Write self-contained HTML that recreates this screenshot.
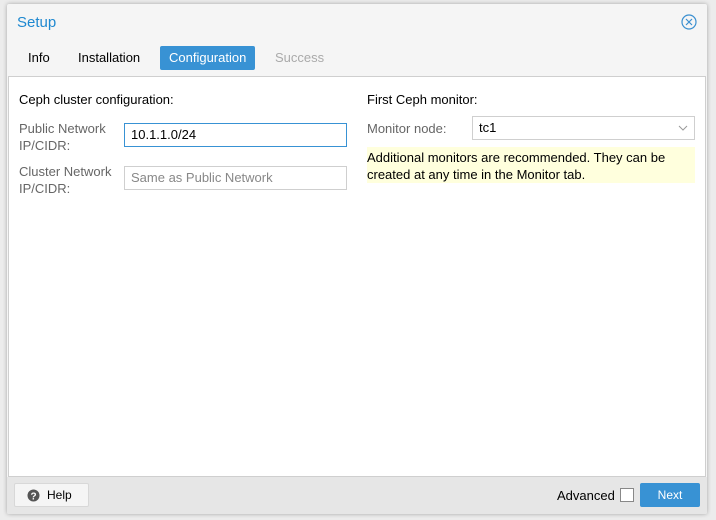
<!DOCTYPE html><html><head><style>
body{margin:0;width:716px;height:520px;background:#ececec;font-family:"Liberation Sans",sans-serif;font-size:13px;position:relative;overflow:hidden}
.win{position:absolute;left:7px;top:4px;width:700px;height:510px;background:#f5f5f5;box-shadow:0 0 4px rgba(0,0,0,.3);border-radius:2px}
.a{position:absolute}
.title{left:10px;top:10px;color:#1e88d0;font-size:15px}
.tab{top:42px;height:24px;line-height:24px;padding:0 10px}
.body{left:1px;top:72px;width:696px;height:399px;background:#fff;border:1px solid #cfcfcf}
.foot{left:0;top:473px;width:700px;height:37px;background:#e6e6e6;border-radius:0 0 2px 2px}
.lbl{color:#666;line-height:17px}
.inp{border:1px solid #cfcfcf;box-sizing:border-box;line-height:22px;padding-left:6px;background:#fff}
</style></head><body><div class="win">
<div class="a title">Setup</div>
<svg class="a" style="left:674px;top:10px" width="16" height="16"><circle cx="8" cy="8" r="7" fill="none" stroke="#3a8fd0" stroke-width="1.2"/><path d="M5 5L11 11M11 5L5 11" stroke="#3a8fd0" stroke-width="1.2"/></svg>
<div class="a tab" style="left:11px">Info</div>
<div class="a tab" style="left:61px">Installation</div>
<div class="a tab" style="left:153px;background:#3892d4;color:#fff;border-radius:2px;padding:0 9px">Configuration</div>
<div class="a tab" style="left:258px;color:#aaa">Success</div>
<div class="a body">
<div class="a" style="left:10px;top:15px">Ceph cluster configuration:</div>
<div class="a lbl" style="left:10px;top:43px">Public Network<br>IP/CIDR:</div>
<div class="a inp" style="left:115px;top:46px;width:223px;height:24px;border-color:#3892d4">10.1.1.0/24</div>
<div class="a lbl" style="left:10px;top:86px">Cluster Network<br>IP/CIDR:</div>
<div class="a inp" style="left:115px;top:89px;width:223px;height:24px;color:#888">Same as Public Network</div>
<div class="a" style="left:358px;top:15px">First Ceph monitor:</div>
<div class="a lbl" style="left:358px;top:43px">Monitor node:</div>
<div class="a inp" style="left:463px;top:39px;width:223px;height:24px">tc1<svg class="a" style="right:6px;top:8px" width="10" height="6"><path d="M1 1L5 5L9 1" fill="none" stroke="#999"/></svg></div>
<div class="a" style="left:358px;top:70px;width:328px;height:36px;background:#ffffdd;line-height:17px;padding-top:2px;box-sizing:border-box">Additional monitors are recommended. They can be created at any time in the Monitor tab.</div>
</div>
<div class="a foot">
<div class="a" style="left:7px;top:6px;width:73px;height:22px;background:#f5f5f5;border:1px solid #d8d8d8;border-radius:2px;line-height:22px"><svg class="a" style="left:12px;top:5px" width="13" height="13"><circle cx="6.5" cy="6.5" r="6" fill="#555"/><text x="6.5" y="10.5" font-size="10" font-weight="bold" fill="#fff" text-anchor="middle" font-family="Liberation Sans">?</text></svg><span class="a" style="left:32px;font-size:12px">Help</span></div>
<div class="a" style="left:550px;top:11px">Advanced</div>
<div class="a" style="left:613px;top:11px;width:12px;height:12px;border:1px solid #888;background:#fff"></div>
<div class="a" style="left:633px;top:6px;width:60px;height:24px;background:#3892d4;border-radius:2px;color:#fff;text-align:center;line-height:24px;font-size:12px">Next</div>
</div>
</div></body></html>
